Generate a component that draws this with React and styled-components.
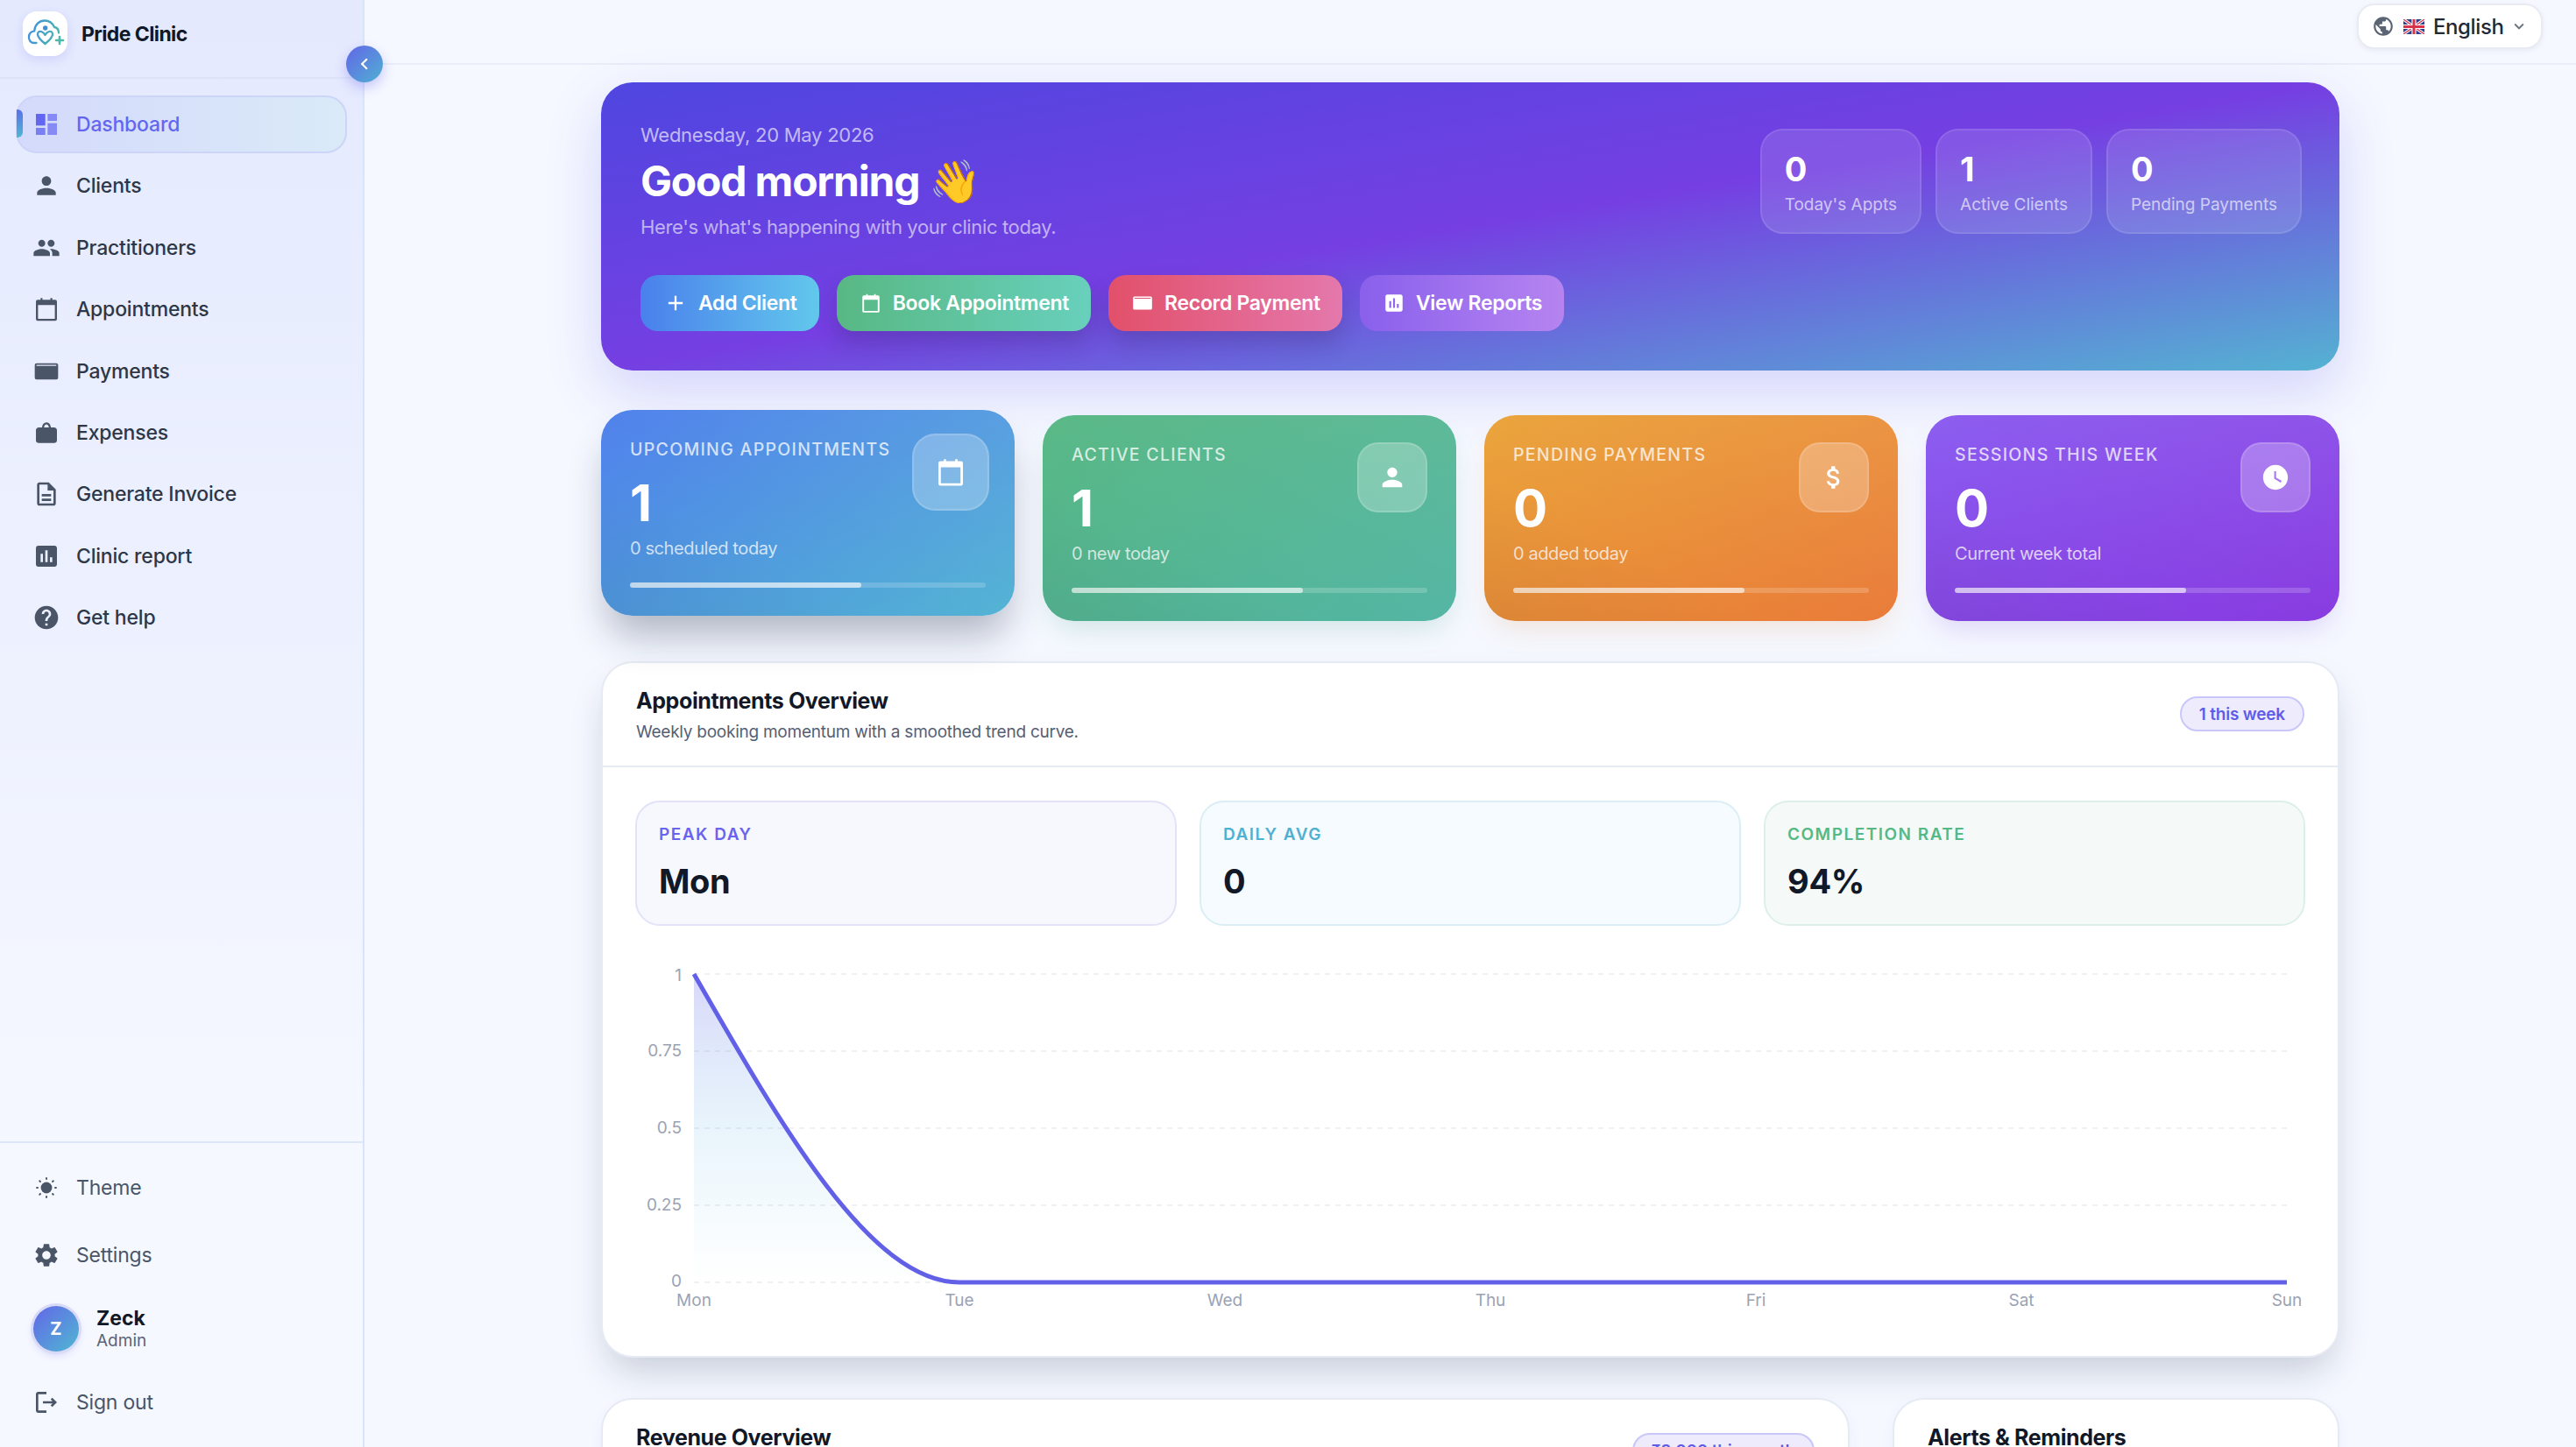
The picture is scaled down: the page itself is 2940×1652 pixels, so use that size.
import React from "react";
import styled, { createGlobalStyle, css } from "styled-components";
import {
  MdPerson,
  MdPeople,
  MdOutlineDescription,
  MdAssessment,
  MdHelp,
  MdSettings,
  MdOutlineLogout,
  MdAdd,
  MdAttachMoney,
  MdWatchLater,
  MdPublic,
  MdKeyboardArrowDown,
  MdChevronLeft,
} from "react-icons/md";

const GlobalStyle = createGlobalStyle`
  html, body {
    margin: 0;
    height: 100%;
    overflow: hidden;
    background: #f5f8ff;
    font-family: Inter, "Liberation Sans", sans-serif;
  }
  * { box-sizing: border-box; }
`;

const DashboardIcon = () => (
  <svg width="32" height="32" viewBox="0 0 24 24" fill="#6366f1">
    <rect x="3" y="3" width="8" height="10" />
    <rect x="13" y="3" width="8" height="6" opacity="0.7" />
    <rect x="3" y="15" width="8" height="6" opacity="0.8" />
    <rect x="13" y="11" width="8" height="10" opacity="0.7" />
  </svg>
);

const CalendarIcon = ({ size = 32 }) => (
  <svg width={size} height={size} viewBox="0 0 24 24" fill="currentColor">
    <path
      fillRule="evenodd"
      d="M7 2.500h1.600V4h6.800V2.500H17V4h2.500A1.500 1.500 0 0 1 21 5.500v15a1.500 1.500 0 0 1-1.500 1.500h-15A1.500 1.500 0 0 1 3 20.500v-15A1.500 1.500 0 0 1 4.500 4H7zM4.800 8.500v11.700h14.400V8.500z"
    />
  </svg>
);

const WalletIcon = ({ size = 32 }) => (
  <svg width={size} height={size} viewBox="0 0 24 24" fill="currentColor">
    <path
      fillRule="evenodd"
      d="M3.500 5h17A1.500 1.500 0 0 1 22 6.500v11a1.500 1.500 0 0 1-1.500 1.500h-17A1.500 1.500 0 0 1 2 17.500v-11A1.500 1.500 0 0 1 3.500 5zM3.500 6.400v1h17v-1z"
    />
  </svg>
);

const BagIcon = () => (
  <svg width="32" height="32" viewBox="0 0 24 24" fill="currentColor">
    <path d="M8.200 7.500C8.500 4.800 10 3.200 12 3.200s3.500 1.600 3.800 4.300h2.700C20 7.500 21 8.500 21 10v8.500c0 1.400-1 2.300-2.500 2.300h-13C4 20.800 3 19.900 3 18.500V10c0-1.500 1-2.500 2.500-2.500zm1.700 0h4.200c-.3-1.700-1-2.600-2.100-2.600S10.200 5.800 9.900 7.500z" />
  </svg>
);

const SunIcon = () => (
  <svg width="32" height="32" viewBox="0 0 24 24" fill="currentColor" stroke="currentColor" strokeLinecap="round" strokeWidth="1.500">
    <circle cx="12" cy="12" r="4.800" stroke="none" />
    <path d="M12 3.800v.7M12 19.500v.7M3.800 12h.7M19.500 12h.7M6.200 6.200l.5.5M17.300 17.300l.5.5M6.200 17.800l.5-.5M17.300 6.700l.5-.5" />
  </svg>
);

const LogoMark = () => (
  <svg width="51" height="51" viewBox="0 0 51 51" fill="none">
    <defs>
      <linearGradient id="logoGrad" x1="6" y1="20" x2="42" y2="30" gradientUnits="userSpaceOnUse">
        <stop offset="0" stopColor="#3f8fe0" />
        <stop offset="1" stopColor="#4db8ab" />
      </linearGradient>
    </defs>
    <path
      d="M15.500 36H13c-4.500 0-6.500-4-6-7.500.5-3.500 3.300-6 6.200-6.200C13.800 15 19 10.500 25 10.500c5 0 9 3 11 7.500 3.500.5 5 3.500 5 6.500"
      stroke="url(#logoGrad)"
      strokeWidth="2.300"
      strokeLinecap="round"
    />
    <circle cx="25.700" cy="19" r="2.700" fill="#3f8fd6" />
    <path
      d="M25.500 37c-3.500-2.800-8-6.500-8.500-10.500-.3-3 2-4 4-3.500 2 .5 3.500 2 4.500 4 1-2 2.500-3.500 4.500-4 2-.5 4.300.5 4 3.500-.5 4-5 7.700-8.500 10.500z"
      stroke="url(#logoGrad)"
      strokeWidth="2.300"
      strokeLinejoin="round"
    />
    <path d="M42 29v8M38 33h8" stroke="#4db8ab" strokeWidth="2.600" strokeLinecap="round" />
  </svg>
);

const UkFlag = () => (
  <svg width="24" height="17" viewBox="0 0 24 17">
    <rect width="24" height="17" rx="1.500" fill="#2b3f8c" />
    <path d="M0 0l24 17M24 0L0 17" stroke="#fff" strokeWidth="3.400" />
    <path d="M0 0l24 17M24 0L0 17" stroke="#d8314a" strokeWidth="1.300" />
    <path d="M12 0v17M0 8.500h24" stroke="#fff" strokeWidth="5.200" />
    <path d="M12 0v17M0 8.500h24" stroke="#d8314a" strokeWidth="3" />
  </svg>
);

const navItems = [
  { label: "Dashboard", icon: <DashboardIcon />, active: true },
  { label: "Clients", icon: <MdPerson size={32} /> },
  { label: "Practitioners", icon: <MdPeople size={32} /> },
  { label: "Appointments", icon: <CalendarIcon /> },
  { label: "Payments", icon: <WalletIcon /> },
  { label: "Expenses", icon: <BagIcon /> },
  { label: "Generate Invoice", icon: <MdOutlineDescription size={32} /> },
  { label: "Clinic report", icon: <MdAssessment size={32} /> },
  { label: "Get help", icon: <MdHelp size={32} /> },
];

const heroStats = [
  { value: 0, label: "Today's Appts" },
  { value: 1, label: "Active Clients" },
  { value: 0, label: "Pending Payments" },
];

const kpis = [
  {
    label: "Upcoming Appointments",
    value: 1,
    sub: "0 scheduled today",
    from: "#4f80ec",
    to: "#52b3d3",
    shadow: "rgba(82, 130, 200, 0.2)",
    lifted: true,
    icon: <CalendarIcon size={34} />,
  },
  {
    label: "Active Clients",
    value: 1,
    sub: "0 new today",
    from: "#58b884",
    to: "#52b5a3",
    shadow: "rgba(60, 150, 120, 0.2)",
    icon: <MdPerson size={34} />,
  },
  {
    label: "Pending Payments",
    value: 0,
    sub: "0 added today",
    from: "#eaa43b",
    to: "#e97a38",
    shadow: "rgba(220, 130, 50, 0.18)",
    icon: <MdAttachMoney size={34} />,
  },
  {
    label: "Sessions This Week",
    value: 0,
    sub: "Current week total",
    from: "#8b5cf0",
    to: "#8739e0",
    shadow: "rgba(120, 70, 220, 0.2)",
    icon: <MdWatchLater size={34} />,
  },
];

const miniStats = [
  { label: "Peak Day", value: "Mon", accent: "#6a63f0", bg: "#f7f8fe", line: "#e2e2f8" },
  { label: "Daily Avg", value: "0", accent: "#4fb0d2", bg: "#f5fbfe", line: "#dceef5" },
  { label: "Completion Rate", value: "94%", accent: "#55b985", bg: "#f5faf8", line: "#ddf0e8" },
];

const yTicks = [
  { label: "1", y: 31, textY: 34 },
  { label: "0.75", y: 119, textY: 120 },
  { label: "0.5", y: 207, textY: 208 },
  { label: "0.25", y: 295, textY: 296 },
  { label: "0", y: 383, textY: 383 },
];
const days = ["Mon", "Tue", "Wed", "Thu", "Fri", "Sat", "Sun"];

const TrendChart = () => (
  <ChartSvg viewBox="0 0 1906 430">
    <defs>
      <linearGradient id="areaFill" x1="0" y1="0" x2="0" y2="1">
        <stop offset="0" stopColor="#6360e8" stopOpacity="0.25" />
        <stop offset="0.5" stopColor="#52aae6" stopOpacity="0.13" />
        <stop offset="1" stopColor="#52c0e6" stopOpacity="0" />
      </linearGradient>
    </defs>
    {yTicks.map((t) => (
      <g key={t.label}>
        <line x1="67" x2="1885" y1={t.y} y2={t.y} stroke="#eff1f4" strokeWidth="2" strokeDasharray="6 6" />
        <text x="53" y={t.textY} textAnchor="end" dominantBaseline="middle" fontSize="19" fill="#9aa3b5">
          {t.label}
        </text>
      </g>
    ))}
    {days.map((d, i) => (
      <text key={d} x={67 + i * 303} y="410" textAnchor="middle" fontSize="19" fill="#9aa3b5">
        {d}
      </text>
    ))}
    <path d="M67 31C168 207 269 383 370 383H67Z" fill="url(#areaFill)" />
    <path d="M67 31C168 207 269 383 370 383H1885" fill="none" stroke="#6360e8" strokeWidth="5" />
  </ChartSvg>
);

export default function App() {
  return (
    <>
      <GlobalStyle />
      <Shell>
        <Sidebar>
          <Brand>
            <LogoBox>
              <LogoMark />
            </LogoBox>
            <BrandName>Pride Clinic</BrandName>
          </Brand>
          <CollapseButton>
            <MdChevronLeft size={26} />
          </CollapseButton>
          <Nav>
            {navItems.map((item) => (
              <NavItem key={item.label} $active={item.active}>
                {item.active && <ActiveBar />}
                <NavIcon>{item.icon}</NavIcon>
                {item.label}
              </NavItem>
            ))}
          </Nav>
          <SideFoot>
            <FootItem>
              <NavIcon>
                <SunIcon />
              </NavIcon>
              Theme
            </FootItem>
            <FootItem>
              <NavIcon>
                <MdSettings size={34} />
              </NavIcon>
              Settings
            </FootItem>
            <UserRow>
              <Avatar>Z</Avatar>
              <div>
                <UserName>Zeck</UserName>
                <UserRole>Admin</UserRole>
              </div>
            </UserRow>
            <FootItem>
              <NavIcon>
                <MdOutlineLogout size={32} />
              </NavIcon>
              Sign out
            </FootItem>
          </SideFoot>
        </Sidebar>

        <Main>
          <Topbar>
            <LangPill>
              <MdPublic size={26} color="#5b6472" />
              <UkFlag />
              <LangName>English</LangName>
              <MdKeyboardArrowDown size={22} color="#6b7280" />
            </LangPill>
          </Topbar>

          <Content>
            <Hero>
              <div>
                <HeroDate>Wednesday, 20 May 2026</HeroDate>
                <HeroTitle>Good morning 👋</HeroTitle>
                <HeroSub>Here's what's happening with your clinic today.</HeroSub>
                <HeroActions>
                  <ActionButton $from="#4a80ec" $to="#62c8ec">
                    <MdAdd size={28} /> Add Client
                  </ActionButton>
                  <ActionButton $from="#58b884" $to="#68d0bc" $glow>
                    <CalendarIcon size={26} /> Book Appointment
                  </ActionButton>
                  <ActionButton $from="#e2506a" $to="#e478ac" $glow>
                    <WalletIcon size={26} /> Record Payment
                  </ActionButton>
                  <ActionButton $from="#8a60ec" $to="#b684f0">
                    <MdAssessment size={26} /> View Reports
                  </ActionButton>
                </HeroActions>
              </div>
              <HeroStats>
                {heroStats.map((s) => (
                  <HeroStat key={s.label}>
                    <HeroStatValue>{s.value}</HeroStatValue>
                    <HeroStatLabel>{s.label}</HeroStatLabel>
                  </HeroStat>
                ))}
              </HeroStats>
            </Hero>

            <KpiGrid>
              {kpis.map((k) => (
                <KpiCard key={k.label} $from={k.from} $to={k.to} $shadow={k.shadow} $lifted={k.lifted}>
                  <KpiHead>
                    <div>
                      <KpiLabel>{k.label}</KpiLabel>
                      <KpiValue>{k.value}</KpiValue>
                      <KpiSub>{k.sub}</KpiSub>
                    </div>
                    <KpiIcon $lifted={k.lifted}>{k.icon}</KpiIcon>
                  </KpiHead>
                  <Progress>
                    <ProgressFill />
                  </Progress>
                </KpiCard>
              ))}
            </KpiGrid>

            <Panel $lifted>
              <PanelHead>
                <div>
                  <PanelTitle>Appointments Overview</PanelTitle>
                  <PanelSub>Weekly booking momentum with a smoothed trend curve.</PanelSub>
                </div>
                <Badge>1 this week</Badge>
              </PanelHead>
              <PanelBody>
                <MiniGrid>
                  {miniStats.map((m) => (
                    <MiniStat key={m.label} $bg={m.bg} $line={m.line}>
                      <MiniLabel $accent={m.accent}>{m.label}</MiniLabel>
                      <MiniValue>{m.value}</MiniValue>
                    </MiniStat>
                  ))}
                </MiniGrid>
                <TrendChart />
              </PanelBody>
            </Panel>

            <BottomGrid>
              <Panel>
                <PanelHead>
                  <div>
                    <PanelTitle>Revenue Overview</PanelTitle>
                  </div>
                  <Badge>₹8,000 this month</Badge>
                </PanelHead>
              </Panel>
              <Panel>
                <PanelHead>
                  <div>
                    <PanelTitle>Alerts &amp; Reminders</PanelTitle>
                  </div>
                </PanelHead>
              </Panel>
            </BottomGrid>
          </Content>
        </Main>
      </Shell>
    </>
  );
}

const Shell = styled.div`
  display: flex;
  height: 100vh;
  overflow: hidden;
`;

const Sidebar = styled.aside`
  position: relative;
  flex: none;
  width: 416px;
  display: flex;
  flex-direction: column;
  background: linear-gradient(180deg, #e4e9fe 0%, #f5f8ff 80%);
  border-right: 2px solid #d9e3f9;
`;

const Brand = styled.div`
  height: 90px;
  display: flex;
  align-items: flex-start;
  gap: 16px;
  padding: 13px 26px 0;
  border-bottom: 2px solid #dde4f9;
`;

const LogoBox = styled.div`
  width: 51px;
  height: 51px;
  border-radius: 16px;
  background: #fff;
  box-shadow: 0 4px 12px rgba(79, 70, 229, 0.14);
`;

const BrandName = styled.div`
  font-size: 23px;
  font-weight: 700;
  line-height: 52px;
  letter-spacing: -0.6px;
  color: #111827;
`;

const CollapseButton = styled.div`
  position: absolute;
  top: 52px;
  left: 395px;
  width: 42px;
  height: 42px;
  border-radius: 50%;
  display: flex;
  align-items: center;
  justify-content: center;
  color: #fff;
  background: linear-gradient(135deg, #6366e8, #4fb0d2);
  box-shadow: 0 6px 14px rgba(79, 70, 229, 0.28);
  z-index: 2;
`;

const Nav = styled.nav`
  display: flex;
  flex-direction: column;
  gap: 4.4px;
  padding: 19px 18px 0;
`;

const rowBase = css`
  position: relative;
  height: 66px;
  display: flex;
  align-items: center;
  gap: 18px;
  padding-left: 19px;
  border-radius: 24px;
  font-size: 23px;
  letter-spacing: -0.2px;
`;

const NavItem = styled.div`
  ${rowBase}
  font-weight: 500;
  color: ${(p) => (p.$active ? "#6366f1" : "#2d3748")};
  border: 2px solid ${(p) => (p.$active ? "#ccd4f8" : "transparent")};
  padding-left: 17px;
  ${(p) => p.$active && "background: linear-gradient(90deg, #d4dafb, #daeaf8);"}
`;

const ActiveBar = styled.span`
  position: absolute;
  left: -1px;
  top: 14px;
  width: 7px;
  height: 32px;
  border-radius: 0 6px 6px 0;
  background: linear-gradient(180deg, #5b6fe8, #4fb8d2);
`;

const NavIcon = styled.span`
  flex: none;
  width: 32px;
  display: flex;
  align-items: center;
  justify-content: center;
  color: #4a5568;
`;

const SideFoot = styled.div`
  margin-top: auto;
  display: flex;
  flex-direction: column;
  gap: 11px;
  padding: 18px 18px 18px;
  border-top: 2px solid #dde7fa;
`;

const FootItem = styled.div`
  ${rowBase}
  font-weight: 400;
  color: #4a5568;
`;

const UserRow = styled.div`
  height: 80px;
  display: flex;
  align-items: center;
  gap: 20px;
  padding-left: 20px;
`;

const Avatar = styled.div`
  width: 52px;
  height: 52px;
  border-radius: 50%;
  display: flex;
  align-items: center;
  justify-content: center;
  font-size: 20px;
  font-weight: 700;
  color: #fff;
  background: linear-gradient(135deg, #6366e8, #4fb8d2);
  box-shadow: 0 0 0 3px #d8daf6, 0 4px 10px rgba(79, 70, 229, 0.2);
`;

const UserName = styled.div`
  font-size: 23px;
  font-weight: 700;
  line-height: 28px;
  color: #111827;
`;

const UserRole = styled.div`
  font-size: 19px;
  line-height: 24px;
  color: #5a6478;
`;

const Main = styled.main`
  flex: 1;
  min-width: 0;
  overflow: hidden;
`;

const Topbar = styled.header`
  height: 74px;
  display: flex;
  justify-content: flex-end;
  padding: 4px 38px 0 0;
  border-bottom: 2px solid #e9edf7;
`;

const LangPill = styled.div`
  width: 212px;
  height: 52px;
  display: flex;
  align-items: center;
  gap: 10px;
  padding-left: 15px;
  background: #fff;
  border: 2px solid #e8ebf3;
  border-radius: 20px;
  box-shadow: 0 2px 6px rgba(15, 23, 42, 0.06);
`;

const LangName = styled.span`
  margin-right: -3px;
  font-size: 24px;
  font-weight: 500;
  letter-spacing: -0.4px;
  color: #1f2937;
`;

const Content = styled.div`
  width: 1984px;
  margin: 0 auto;
  padding-top: 20px;
`;

const Hero = styled.section`
  height: 329px;
  display: flex;
  justify-content: space-between;
  align-items: flex-start;
  padding: 44px 43px 0 45px;
  margin-bottom: 51px;
  border-radius: 36px;
  background: linear-gradient(to bottom right, #4f46e0 0%, #753fe2 50%, #54b2d2 100%);
  box-shadow: 0 24px 64px rgba(79, 70, 229, 0.2);
`;

const HeroDate = styled.div`
  font-size: 22px;
  line-height: 32px;
  letter-spacing: -0.25px;
  color: rgba(255, 255, 255, 0.65);
`;

const HeroTitle = styled.h1`
  margin: 7px 0 0;
  font-size: 48px;
  line-height: 60px;
  font-weight: 700;
  letter-spacing: -1.2px;
  color: #fff;
`;

const HeroSub = styled.div`
  margin-top: 6px;
  font-size: 22px;
  line-height: 32px;
  letter-spacing: -0.36px;
  color: rgba(255, 255, 255, 0.6);
`;

const HeroActions = styled.div`
  display: flex;
  gap: 20px;
  margin-top: 39px;
`;

const ActionButton = styled.button`
  height: 64px;
  display: flex;
  align-items: center;
  gap: 12px;
  padding: 0 25px 0 26px;
  border: 0;
  border-radius: 20px;
  font-family: inherit;
  font-size: 23px;
  font-weight: 600;
  letter-spacing: -0.3px;
  color: #fff;
  background: linear-gradient(90deg, ${(p) => p.$from}, ${(p) => p.$to});
  ${(p) => p.$glow && "box-shadow: 0 14px 26px rgba(30, 30, 60, 0.2);"}
`;

const HeroStats = styled.div`
  display: flex;
  gap: 16px;
  margin-top: 9px;
`;

const HeroStat = styled.div`
  height: 120px;
  padding: 20px 26px 0;
  border-radius: 26px;
  background: rgba(255, 255, 255, 0.12);
  border: 2px solid rgba(255, 255, 255, 0.1);
`;

const HeroStatValue = styled.div`
  font-size: 38px;
  line-height: 48px;
  font-weight: 700;
  color: #fff;
`;

const HeroStatLabel = styled.div`
  margin-top: 3px;
  font-size: 19px;
  line-height: 28px;
  white-space: nowrap;
  color: rgba(255, 255, 255, 0.65);
`;

const KpiGrid = styled.div`
  display: grid;
  grid-template-columns: repeat(4, 1fr);
  gap: 32px;
  margin-bottom: 46px;
`;

const KpiCard = styled.div`
  position: relative;
  height: 235px;
  padding: 31px 33px 0;
  border-radius: 36px;
  overflow: visible;
  background: linear-gradient(to bottom right, ${(p) => p.$from}, ${(p) => p.$to});
  box-shadow: 0 16px 32px -8px ${(p) => p.$shadow};
  ${(p) =>
    p.$lifted &&
    css`
      transform: translateY(-6px);
      box-shadow: 0 30px 44px -8px rgba(20, 30, 60, 0.3);
    `}
  &::after {
    content: "";
    position: absolute;
    inset: 0;
    border-radius: inherit;
    background: linear-gradient(to top right, rgba(0, 0, 0, 0.06), transparent 35%, rgba(255, 255, 255, 0.05));
    pointer-events: none;
  }
`;

const KpiHead = styled.div`
  display: flex;
  justify-content: space-between;
  align-items: flex-start;
`;

const KpiLabel = styled.div`
  font-size: 19.5px;
  line-height: 28px;
  font-weight: 500;
  letter-spacing: 1.3px;
  text-transform: uppercase;
  white-space: nowrap;
  color: rgba(255, 255, 255, 0.75);
`;

const KpiValue = styled.div`
  margin-top: 15px;
  font-size: 58px;
  line-height: 64px;
  font-weight: 700;
  color: #fff;
`;

const KpiSub = styled.div`
  margin-top: 6px;
  font-size: 20px;
  line-height: 28px;
  letter-spacing: -0.4px;
  color: rgba(255, 255, 255, 0.75);
`;

const KpiIcon = styled.div`
  flex: none;
  width: 80px;
  height: 80px;
  display: flex;
  align-items: center;
  justify-content: center;
  border-radius: 24px;
  color: #fff;
  background: rgba(255, 255, 255, 0.25);
  border: 2px solid rgba(255, 255, 255, 0.14);
  ${(p) => p.$lifted && "transform: scale(1.1);"}
`;

const Progress = styled.div`
  height: 6px;
  margin-top: 25px;
  border-radius: 3px;
  background: rgba(255, 255, 255, 0.18);
`;

const ProgressFill = styled.div`
  width: 65%;
  height: 100%;
  border-radius: 3px;
  background: rgba(255, 255, 255, 0.62);
`;

const Panel = styled.section`
  min-height: 200px;
  background: #fff;
  border: 2px solid #e6eaf3;
  border-radius: 36px;
  box-shadow: ${(p) =>
    p.$lifted ? "0 22px 44px -10px rgba(20, 30, 60, 0.22)" : "0 6px 16px rgba(79, 70, 229, 0.05)"};
`;

const PanelHead = styled.div`
  display: flex;
  justify-content: space-between;
  align-items: flex-start;
  padding: 25px 38px 24px;
  border-bottom: 2px solid #e6ebf2;
`;

const PanelTitle = styled.h2`
  margin: 0;
  font-size: 25px;
  line-height: 36px;
  font-weight: 700;
  letter-spacing: -0.4px;
  color: #111827;
`;

const PanelSub = styled.div`
  margin-top: 4px;
  font-size: 19px;
  line-height: 28px;
  letter-spacing: -0.25px;
  color: #566074;
`;

const Badge = styled.span`
  height: 40px;
  margin-top: 13px;
  display: flex;
  align-items: center;
  padding: 0 20px;
  border-radius: 20px;
  font-size: 19px;
  font-weight: 600;
  letter-spacing: -0.2px;
  white-space: nowrap;
  color: #5f5ce8;
  background: #eeecfc;
  border: 2px solid #c9c7fa;
`;

const PanelBody = styled.div`
  padding: 38px 37px 37px;
`;

const MiniGrid = styled.div`
  display: grid;
  grid-template-columns: repeat(3, 1fr);
  gap: 26px;
  margin-bottom: 24px;
`;

const MiniStat = styled.div`
  height: 143px;
  padding: 23px 25px 0;
  border-radius: 28px;
  background: ${(p) => p.$bg};
  border: 2px solid ${(p) => p.$line};
`;

const MiniLabel = styled.div`
  font-size: 19px;
  line-height: 28px;
  font-weight: 600;
  letter-spacing: 1.5px;
  text-transform: uppercase;
  color: ${(p) => p.$accent};
`;

const MiniValue = styled.div`
  margin-top: 14px;
  font-size: 38px;
  line-height: 50px;
  font-weight: 700;
  letter-spacing: -0.3px;
  color: #111827;
`;

const ChartSvg = styled.svg`
  display: block;
  width: 1906px;
  height: 430px;
`;

const BottomGrid = styled.div`
  display: grid;
  grid-template-columns: 1fr 510px;
  gap: 49px;
  margin-top: 46px;
`;
